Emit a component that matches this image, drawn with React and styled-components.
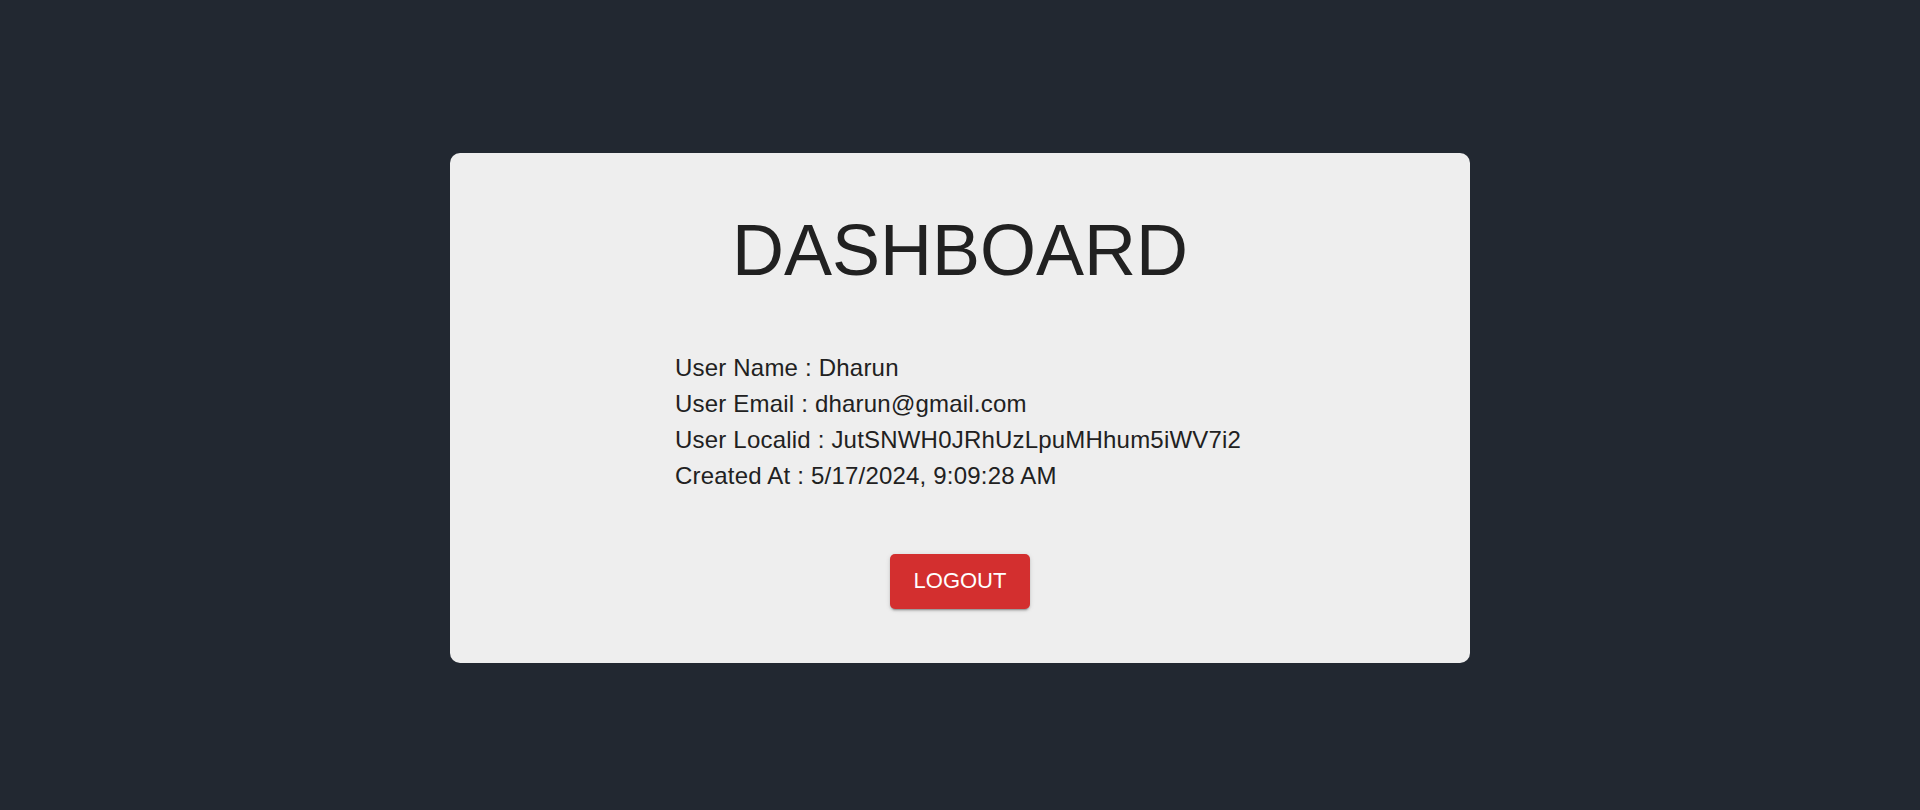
import styled, { createGlobalStyle } from "styled-components";

const GlobalStyle = createGlobalStyle`
  body {
    margin: 0;
    background: #222831;
    font-family: "Liberation Sans", Arial, sans-serif;
  }
`;

const Page = styled.main`
  min-height: 100vh;
  box-sizing: border-box;
  padding-top: 5px;
  display: flex;
  align-items: center;
  justify-content: center;
`;

const Card = styled.section`
  width: 1020px;
  box-sizing: border-box;
  background: #eeeeee;
  border-radius: 10px;
  padding: 56px 0 54px;
  display: flex;
  flex-direction: column;
  align-items: center;
  color: #212121;
`;

const Title = styled.h1`
  margin: 0;
  font-size: 72px;
  font-weight: 400;
  line-height: normal;
`;

const Details = styled.div`
  align-self: flex-start;
  margin: 59px 0 60px 225px;
`;

const Line = styled.p`
  margin: 0;
  font-size: 24px;
  letter-spacing: 0.2px;
  line-height: 36px;
`;

const LogoutButton = styled.button`
  height: 55px;
  width: 140px;
  padding: 0;
  border: none;
  border-radius: 5px;
  background: #d32f2f;
  color: #fff;
  font-family: inherit;
  font-size: 22px;
  line-height: 1;
  text-transform: uppercase;
  cursor: pointer;
  box-shadow: 0 3px 1px -2px rgba(0, 0, 0, 0.2), 0 2px 2px 0 rgba(0, 0, 0, 0.14),
    0 1px 5px 0 rgba(0, 0, 0, 0.12);
`;

const user = {
  name: "Dharun",
  email: "dharun@gmail.com",
  localId: "JutSNWH0JRhUzLpuMHhum5iWV7i2",
  createdAt: "5/17/2024, 9:09:28 AM",
};

function App() {
  return (
    <>
      <GlobalStyle />
      <Page>
        <Card>
          <Title>DASHBOARD</Title>
          <Details>
            <Line>User Name : {user.name}</Line>
            <Line>User Email : {user.email}</Line>
            <Line>User Localid : {user.localId}</Line>
            <Line>Created At : {user.createdAt}</Line>
          </Details>
          <LogoutButton>Logout</LogoutButton>
        </Card>
      </Page>
    </>
  );
}

export default App;
